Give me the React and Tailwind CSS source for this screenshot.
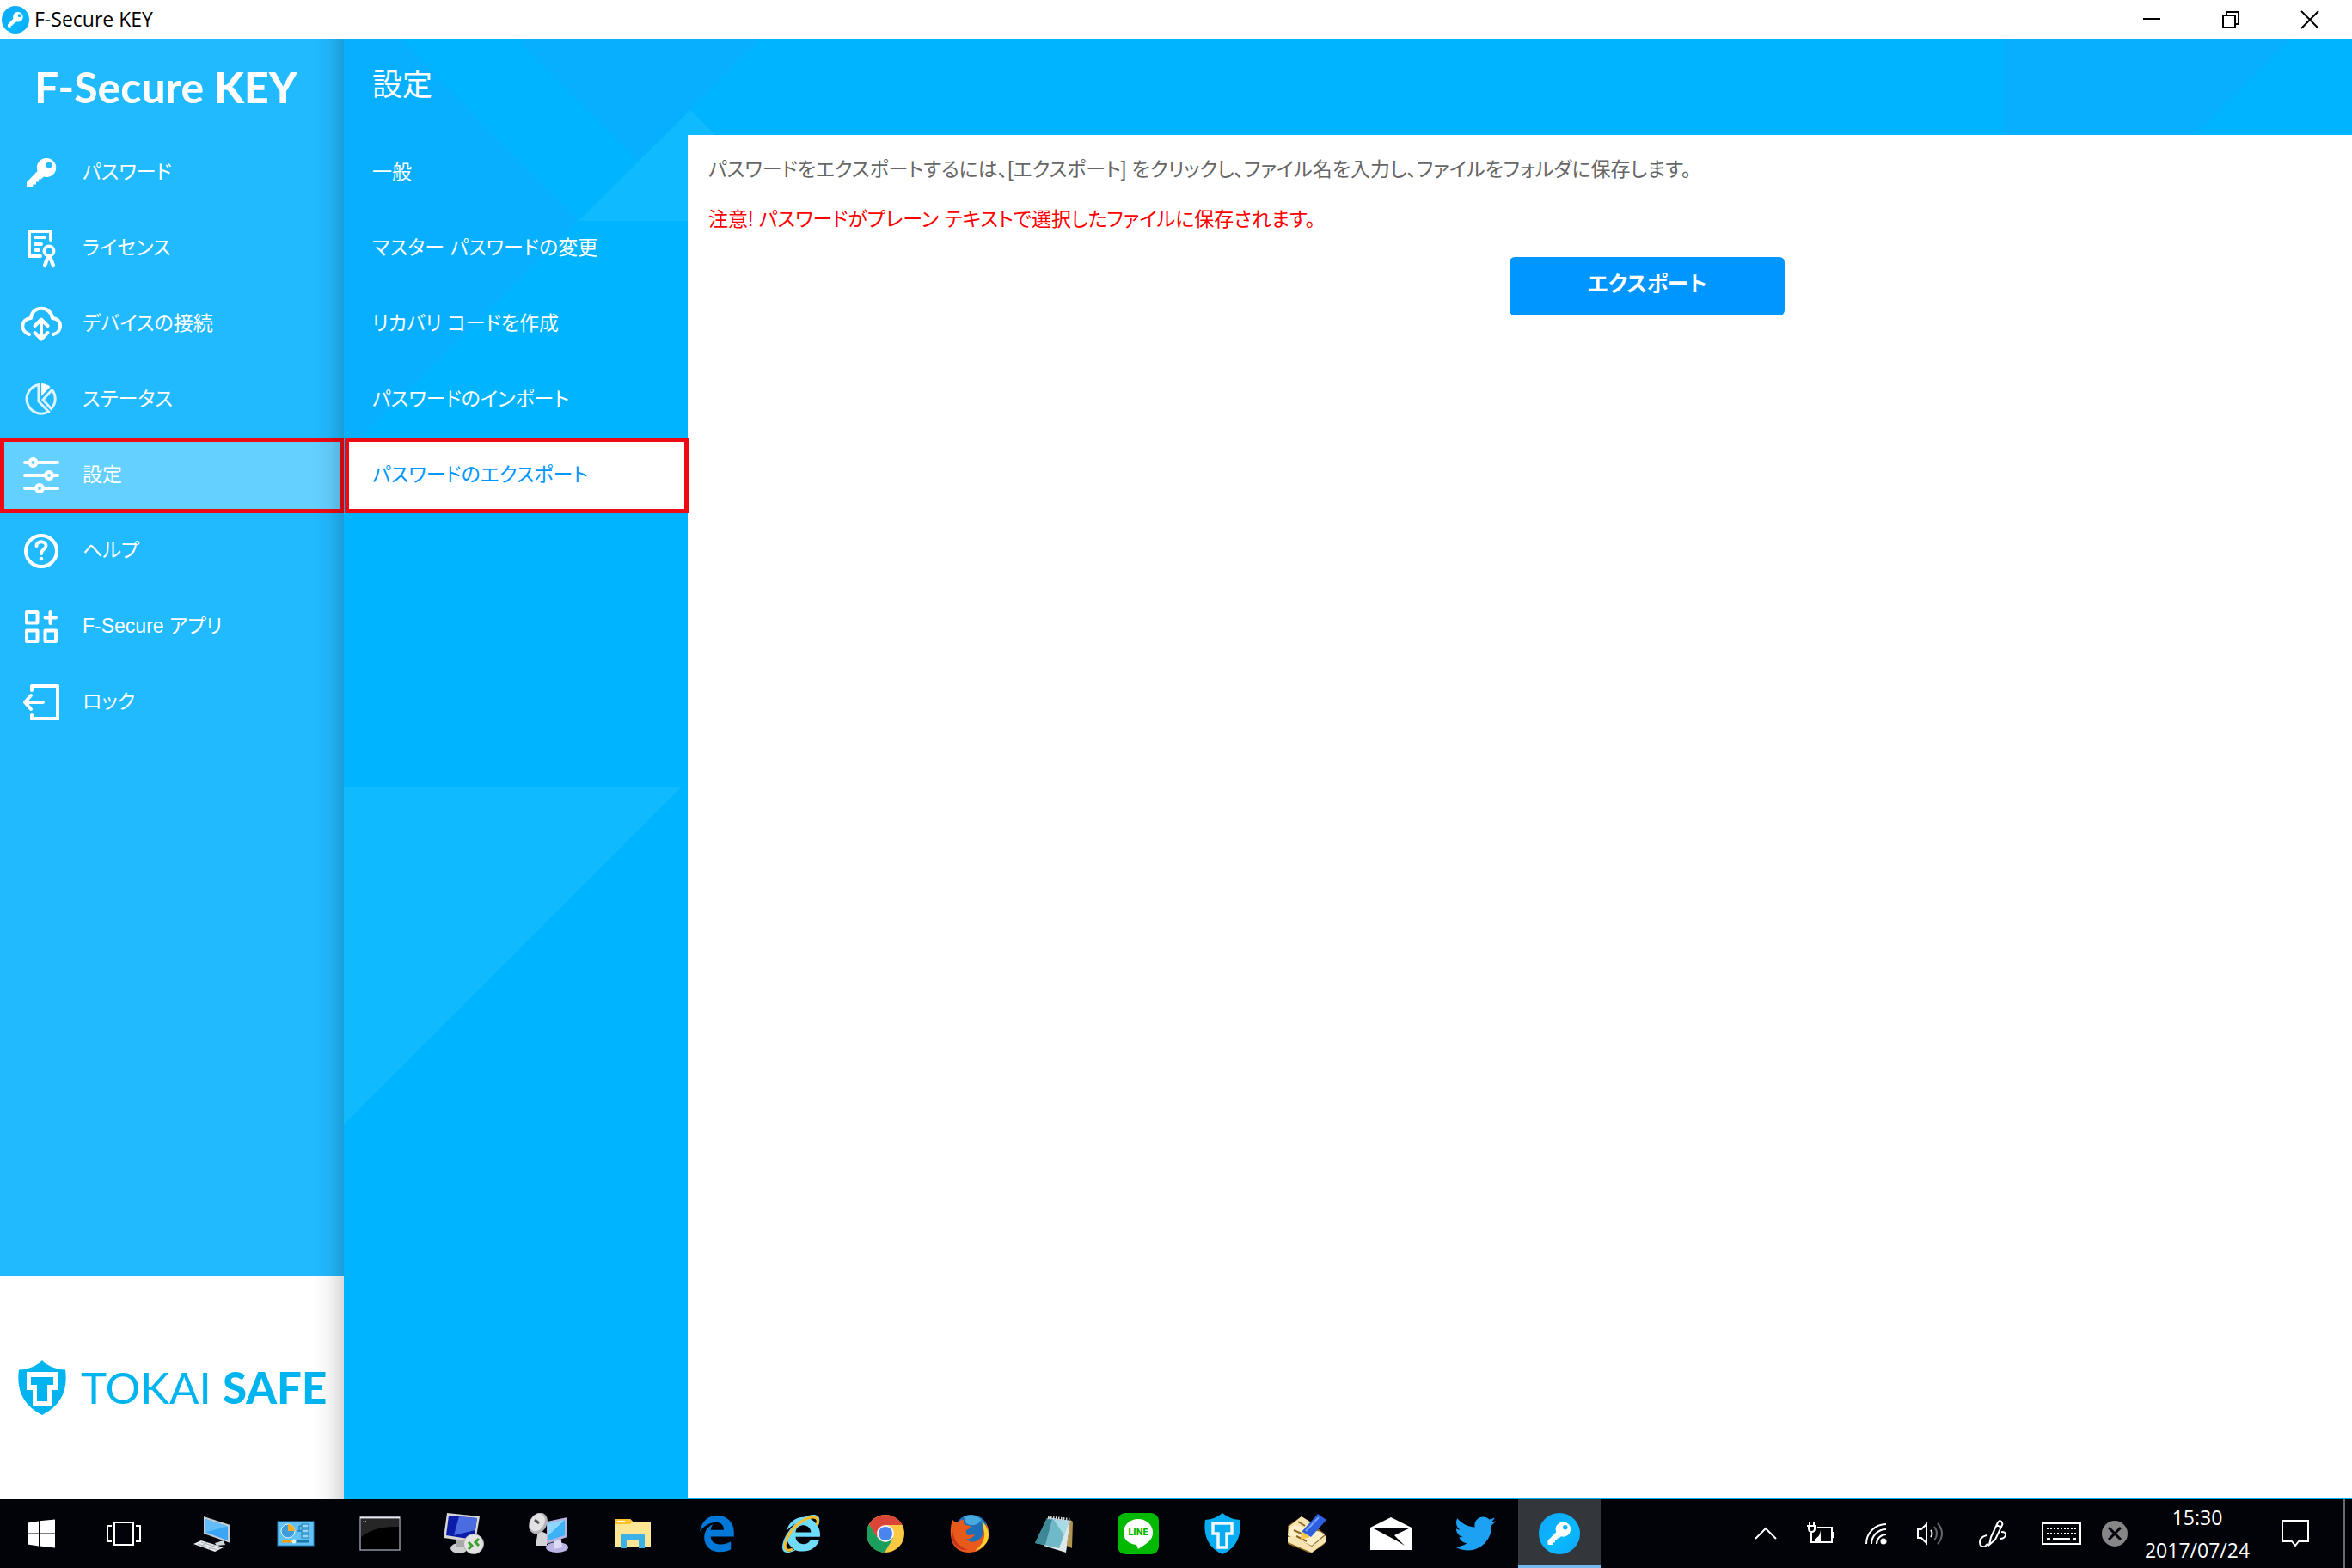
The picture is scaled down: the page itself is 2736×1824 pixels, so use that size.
import { FaEdgeLegacy, FaInternetExplorer, FaTwitter } from "react-icons/fa";

const line = {
  fill: "none",
  stroke: "currentColor",
  strokeWidth: 4,
  strokeLinecap: "round",
  strokeLinejoin: "round",
};

const Icon = ({ children, className = "size-12", viewBox = "0 0 48 48" }) => (
  <svg className={`shrink-0 ${className}`} viewBox={viewBox} aria-hidden="true">
    {children}
  </svg>
);

/* ---------- sidebar icons ---------- */

const KeyShape = () => (
  <path
    fill="currentColor"
    fillRule="evenodd"
    d="M30 7a11 11 0 1 1-3 21.500L23.500 31.500H21V34.500H18V37.500H14.500L14 41H8.500Q7 41 7 39.500V35L19.500 22A11 11 0 0 1 30 7ZM33 11.500a3.600 3.600 0 1 0 0.100 0Z"
  />
);

const KeyIcon = () => (
  <Icon>
    <KeyShape />
  </Icon>
);

const LicenseIcon = () => (
  <Icon>
    <g {...line}>
      <path d="M35 14V4H10V33H23" />
      <path d="M17 11H28M17 19H24M17.500 26H21" />
      <circle cx="33" cy="27" r="5.500" />
      <path d="M31.500 35L28 44M34.500 35L38 44" strokeWidth="4.500" />
    </g>
  </Icon>
);

const CloudIcon = () => (
  <Icon>
    <g {...line}>
      <path d="M10 36C-1 32 0 18 12 17C13 2 35 2 37 17C49 18 49 33 38 36" />
      <path d="M24 19V41M16.500 26L24 18.500L31.500 26M16.500 34L24 41.500L31.500 34" />
    </g>
  </Icon>
);

const StatusIcon = () => (
  <Icon>
    <g fill="none" stroke="currentColor" strokeWidth="3" opacity=".85">
      <path d="M21 6.500A17 17 0 1 0 32.500 38L21 26Z" />
      <path d="M36.500 12.500A16.500 16.500 0 0 1 35.500 34.500L26 24Z" />
    </g>
    <path d="M24 5A18 18 0 0 1 34.500 9L24 20Z" fill="currentColor" />
  </Icon>
);

const SlidersIcon = () => (
  <Icon>
    <g {...line}>
      <path d="M5 9H9M19 9H43M5 24H28M38 24H43M5 39H17M27 39H43" />
      <circle cx="14.500" cy="9" r="4" />
      <circle cx="33" cy="24" r="4" />
      <circle cx="22" cy="39" r="4" />
    </g>
  </Icon>
);

const HelpIcon = () => (
  <Icon>
    <g {...line}>
      <circle cx="24" cy="24" r="18" />
      <path d="M18.500 18C18.500 11.500 29.500 11.500 29.500 18C29.500 22 24 22 24 27" />
    </g>
    <circle cx="24" cy="33" r="2.300" fill="currentColor" />
  </Icon>
);

const AppsIcon = () => (
  <Icon>
    <g {...line}>
      <rect x="7" y="7" width="12.500" height="12.500" />
      <rect x="7" y="28.500" width="12.500" height="12.500" />
      <rect x="28.500" y="28.500" width="12.500" height="12.500" />
      <path d="M34.500 7V20M28.500 13.500H41" />
    </g>
  </Icon>
);

const LockIcon = () => (
  <Icon>
    <g {...line}>
      <path d="M13 10V5H43V43H13V38" />
      <path d="M5 24H26M12 16L5 24L12 32" />
    </g>
  </Icon>
);

/* ---------- logos ---------- */

const KeyBadge = ({ className }) => (
  <Icon className={className}>
    <defs>
      <linearGradient id="badge" x1="0" y1="0" x2="1" y2="1">
        <stop offset="0" stopColor="#12a5fb" />
        <stop offset=".6" stopColor="#08b9ff" />
        <stop offset="1" stopColor="#12a5fb" />
      </linearGradient>
    </defs>
    <circle cx="24" cy="24" r="24" fill="url(#badge)" />
    <g className="text-white" transform="translate(5 5) scale(.78)">
      <KeyShape />
    </g>
  </Icon>
);

const ShieldLogo = () => (
  <Icon className="h-16 w-[58px]" viewBox="0 0 58 64">
    <path
      fill="#00b4f0"
      d="M29 0Q38 11 56 11.500Q61 48 29 64Q-3 48 2 11.500Q20 11 29 0Z"
    />
    <path fill="#fff" d="M11 14H47V35H40V54H18V35H11Z" />
    <path fill="#00b4f0" d="M16 20H42V29H35V48H23V29H16Z" />
  </Icon>
);

/* ---------- taskbar icons ---------- */

const ComputerIcon = () => (
  <Icon>
    <path d="M28 35L38 32L40 37L30 38Z" fill="#cfd6da" />
    <path d="M15 4L46 14V35L15 24Z" fill="#c3ccd2" />
    <path d="M17 7L43 15.500V32L17 22.500Z" fill="#3aa5f5" />
    <path d="M17 7L43 15.500L17 22.500Z" fill="#64bcf8" />
    <path d="M3 36L12 32L38 40L28 45Z" fill="#e6eaee" />
    <path d="M8 36L31 43M12 34L34 41M12 39L19 34M21 42L28 37" stroke="#a4adb5" />
  </Icon>
);

const PanelIcon = () => (
  <Icon>
    <rect x="3" y="10" width="42" height="28" fill="#62c2f3" stroke="#2283bb" />
    <circle cx="15" cy="21" r="8" fill="#3e9edb" stroke="#e6f6ff" />
    <path d="M15 21V13A8 8 0 0 1 23 21Z" fill="#f8aa28" />
    <path d="M25 21H28V15H31M28 21H31" fill="none" stroke="#19669a" />
    <g fill="#92d8fb" stroke="#1c79b2">
      <rect x="31" y="13" width="8" height="4" />
      <rect x="31" y="19" width="8" height="4" />
      <rect x="31" y="25" width="8" height="4" />
    </g>
    <path d="M8 33H22" stroke="#f59f18" strokeWidth="3" />
    <path d="M22 33H39" stroke="#1b76ae" strokeWidth="3" />
    <circle cx="22" cy="33" r="2.500" fill="#e6f6ff" />
  </Icon>
);

const TerminalIcon = () => (
  <Icon>
    <rect x="1" y="5" width="46" height="38" fill="#000" stroke="#8d95a3" strokeWidth="1.500" />
    <path d="M2 7H46V16Q18 15 2 28Z" fill="#262626" />
    <path d="M1 5.500H47" stroke="#e5e9f2" strokeWidth="2" />
    <path d="M4 10H6M7 9L9 11" stroke="#aaa" />
  </Icon>
);

const RemoteIcon = () => (
  <Icon>
    <ellipse cx="18" cy="41" rx="10" ry="6" fill="#cfcfcf" />
    <path d="M14 30H24V40H14Z" fill="#a9a9a9" />
    <path d="M4 0L42 4L37 34L0 29Z" fill="#d8d6d2" />
    <path d="M6 3L39 6L35 31L3 26Z" fill="#0b1ca8" />
    <path d="M18 4L39 6L37 20L12 26Z" fill="#4b6be0" />
    <circle cx="35" cy="36" r="11.500" fill="#e4e4e2" stroke="#aaa" />
    <path d="M29 34L33 38L29 42M41 30L37 34L41 38" fill="none" stroke="#3c9f2d" strokeWidth="3" />
  </Icon>
);

const DishIcon = () => (
  <Icon>
    <ellipse cx="34" cy="40" rx="13" ry="6" fill="#b9b6e6" />
    <path d="M12 20L22 24V38H9Z" fill="#d5d5d8" />
    <ellipse cx="12" cy="12" rx="10" ry="13" fill="#b4b4b8" transform="rotate(30 12 12)" />
    <ellipse cx="11" cy="11" rx="8" ry="11" fill="#e2e2e3" transform="rotate(30 11 11)" />
    <path d="M8 8L13 12" stroke="#555" strokeWidth="3" />
    <path d="M30 28L38 26L40 40L30 42Z" fill="#dcdaf5" />
    <path d="M22 10L46 5V28L22 36Z" fill="#b7b2df" />
    <path d="M24 12L43 8V26L24 32Z" fill="#3db2f5" />
    <path d="M24 12L43 8L24 26Z" fill="#8ed6fb" />
  </Icon>
);

const FolderIcon = () => (
  <Icon>
    <path d="M3 8Q3 7 4 7H21L24 10H44Q45 10 45 11V40H3Z" fill="#ffe694" />
    <path d="M3 13V8Q3 7 4 7H21L24 10L21 13Z" fill="#fcc32c" />
    <path d="M6 10H15" stroke="#fff" strokeWidth="2" />
    <path d="M10 41V26Q10 24 12 24H36Q38 24 38 26V41H31V31H17V41Z" fill="#3bb1e5" />
  </Icon>
);

const IeIcon = () => (
  <span className="relative">
    <FaInternetExplorer className="size-11 text-[#6fdcfb]" />
    <svg className="absolute inset-0 size-11" viewBox="0 0 44 44" aria-hidden="true">
      <path
        d="M12 40C4 44 1 38 5 29C11 14 27 2 37 3C42 4 42 8 40 12"
        fill="none"
        stroke="#f7bd2a"
        strokeWidth="3"
      />
    </svg>
  </span>
);

const ChromeIcon = () => (
  <Icon>
    <circle cx="24" cy="24" r="22" fill="#fcc943" />
    <path d="M5 13A22 22 0 0 0 23 46L33 29L24 24L15 29Z" fill="#1c9f5e" />
    <path d="M5 13A22 22 0 0 1 43.500 14H24L14 28Z" fill="#db4537" />
    <circle cx="24" cy="24" r="10" fill="#f1f1f1" />
    <circle cx="24" cy="24" r="8" fill="#4a85ef" />
  </Icon>
);

const FirefoxIcon = () => (
  <Icon>
    <circle cx="26" cy="22" r="20" fill="#1f6fb8" />
    <path d="M17 4Q28 -1 38 8Q30 18 20 12Z" fill="#48a9de" />
    <path
      d="M4 8Q8 12 11 11Q14 7 17 8Q16 12 19 14L25 15Q25 18 20 20Q19 24 22 26L30 25Q27 31 20 30Q26 37 35 31Q42 25 39 12Q44 16 43 12Q49 24 44 34Q37 46 24 46Q4 46 2 26Q1 16 4 8Z"
      fill="#e75a1c"
    />
    <path d="M38 9Q50 21 44 34Q38 42 30 44Q43 34 41 22Z" fill="#fbd232" />
    <path d="M4 20Q6 38 22 43Q8 44 3 30Z" fill="#c9321c" />
  </Icon>
);

const NotepadIcon = () => (
  <Icon>
    <path d="M43 8L46 10L45 41L39 38Z" fill="#b49550" />
    <path d="M17 5L43 9L38 46L12 38Z" fill="#dde7ea" />
    <path d="M16 6L42 9L30 41L2 35Z" fill="#6fb9c9" />
    <path d="M16 6L22 7L14 37L2 35Z" fill="#3e8797" />
    <path d="M24 8L42 9L36 26Z" fill="#a8dbe5" />
    <path d="M17 5L43 8" stroke="#d8d8d8" strokeWidth="4" strokeDasharray="1.500 1.500" />
  </Icon>
);

const LineIcon = () => (
  <Icon>
    <rect width="48" height="48" rx="9" fill="#00b900" />
    <path d="M24 7C34 7 41 14 41 23C41 32 33 36 24 42Q23 39 22 37C13 36 7 31 7 23C7 14 14 7 24 7Z" fill="#fff" />
    <text
      x="24"
      y="26"
      textAnchor="middle"
      fontFamily="Roboto"
      fontWeight="900"
      fontSize="11"
      fill="#00b900"
    >
      LINE
    </text>
  </Icon>
);

const ShieldIcon = () => (
  <Icon>
    <path d="M24 0Q32 7 44 8Q48 37 24 48Q0 37 4 8Q16 7 24 0Z" fill="#07adf2" />
    <path d="M13 12H35V24H29V40H19V24H13Z" fill="#07adf2" stroke="#eef6fa" strokeWidth="3.500" />
  </Icon>
);

const NotesIcon = () => (
  <Icon>
    <path d="M18 4L45 24V36L29 47L2 36L2 15Z" fill="#8e6827" />
    <path d="M18 4L34 14L24 26L3 16Z" fill="#f6e4b2" />
    <path d="M3 18L10 14L40 22L45 25L30 38L2 26Z" fill="#fdf0c8" />
    <path d="M2 28L8 27L30 39L46 26L46 34L30 46L2 34Z" fill="#f6e4b2" />
    <path d="M12 27L24 33M9 20L20 25M14 10L22 15" stroke="#8e6827" strokeWidth="2" />
    <path d="M37 1L47 8L29 28L18 22Z" fill="#2b5fe0" />
    <path d="M18 21L28 28L17 31Z" fill="#f7c748" />
    <path d="M38 5L23 21" stroke="#7da0f7" strokeWidth="2" />
  </Icon>
);

const MailIcon = () => (
  <Icon>
    <path d="M24 5L48 17V43H0V17Z" fill="#fff" />
    <path d="M2 17H47L28 26L40 38L32 33Z" fill="#010308" />
  </Icon>
);

const StartIcon = () => (
  <Icon>
    <path d="M8 11.500L21 9.500V23.500H8ZM22 9.300L40 7.500V23.500H22ZM8 24.500H21V38.500L8 36.500ZM22 24.500H40V40.500L22 38.500Z" fill="#fff" />
  </Icon>
);

const TaskViewIcon = () => (
  <Icon>
    <path d="M13 11H35V37H13ZM10 15H5V33H10M38 15H43V33H38" fill="none" stroke="#fff" strokeWidth="2" />
  </Icon>
);

const tasks = [
  { name: "PC", icon: <ComputerIcon /> },
  { name: "コントロール パネル", icon: <PanelIcon /> },
  { name: "コマンド プロンプト", icon: <TerminalIcon /> },
  { name: "リモート デスクトップ", icon: <RemoteIcon /> },
  { name: "ネットワーク", icon: <DishIcon /> },
  { name: "エクスプローラー", icon: <FolderIcon /> },
  { name: "Edge", icon: <FaEdgeLegacy className="size-11 text-[#0078d7]" /> },
  { name: "Internet Explorer", icon: <IeIcon /> },
  { name: "Chrome", icon: <ChromeIcon /> },
  { name: "Firefox", icon: <FirefoxIcon /> },
  { name: "メモ帳", icon: <NotepadIcon /> },
  { name: "LINE", icon: <LineIcon /> },
  { name: "TOKAI SAFE", icon: <ShieldIcon /> },
  { name: "エディター", icon: <NotesIcon /> },
  { name: "メール", icon: <MailIcon /> },
  { name: "Twitter", icon: <FaTwitter className="size-12 text-[#1da1f2]" /> },
  { name: "F-Secure KEY", icon: <KeyBadge />, active: true },
];

const menu = [
  { label: "パスワード", icon: <KeyIcon /> },
  { label: "ライセンス", icon: <LicenseIcon /> },
  { label: "デバイスの接続", icon: <CloudIcon /> },
  { label: "ステータス", icon: <StatusIcon /> },
  { label: "設定", icon: <SlidersIcon />, active: true },
  { label: "ヘルプ", icon: <HelpIcon /> },
  { label: "F-Secure アプリ", icon: <AppsIcon /> },
  { label: "ロック", icon: <LockIcon /> },
];

const settings = [
  { label: "一般" },
  { label: "マスター パスワードの変更" },
  { label: "リカバリ コードを作成" },
  { label: "パスワードのインポート" },
  { label: "パスワードのエクスポート", active: true },
];

const TitleBar = () => (
  <div className="flex h-[45px] items-center bg-white font-['Open_Sans',sans-serif] text-[23px] text-black">
    <KeyBadge className="ml-0.5 size-8" />
    <span className="ml-1.5">F-Secure KEY</span>
    <div className="ml-auto flex h-full pr-[3px]">
      <button aria-label="最小化" className="flex w-[92px] items-center justify-center">
        <Icon className="size-6" viewBox="0 0 24 24">
          <path d="M2 11H22" stroke="#000" strokeWidth="2" />
        </Icon>
      </button>
      <button aria-label="元に戻す" className="flex w-[92px] items-center justify-center">
        <Icon className="size-6" viewBox="0 0 24 24">
          <path d="M3 7H17V21H3ZM7 7V3H21V17H17" fill="none" stroke="#000" strokeWidth="2" />
        </Icon>
      </button>
      <button aria-label="閉じる" className="flex w-[92px] items-center justify-center">
        <Icon className="size-6" viewBox="0 0 24 24">
          <path d="M2 2L22 22M22 2L2 22" stroke="#000" strokeWidth="2" />
        </Icon>
      </button>
    </div>
  </div>
);

const Sidebar = () => (
  <aside className="relative flex w-[400px] shrink-0 flex-col">
    <div className="flex-1 bg-[#21baff]">
      <h1 className="flex h-28 items-center pl-10 font-['Lato',sans-serif] text-[50px] font-bold">
        <span>
          F-Secure <b className="font-black">KEY</b>
        </span>
      </h1>
      <nav>
        {menu.map((item) => (
          <a
            key={item.label}
            href="#"
            className={`relative flex h-[88px] items-center ${
              item.active
                ? "z-10 border-5 border-[#ee0a12] bg-[#64d0ff] pl-[19px]"
                : "pl-6"
            }`}
          >
            {item.icon}
            <span className="ml-6 pb-0.5">{item.label}</span>
          </a>
        ))}
      </nav>
    </div>
    <div className="flex h-[260px] items-center bg-white pl-5 text-[#00b4f0]">
      <ShieldLogo />
      <span className="ml-4 whitespace-nowrap font-['Lato',sans-serif] text-[51px] font-normal">
        TOKAI <b className="font-black">SAFE</b>
      </span>
    </div>
    <div className="pointer-events-none absolute inset-y-0 right-0 z-20 w-9 bg-linear-to-r from-black/0 via-black/4 to-black/15" />
  </aside>
);

const Facets = () => (
  <>
    <svg className="absolute top-0 left-0" width="560" height="1699" aria-hidden="true">
      <path d="M0 0H65L272 212L0 484ZM202 0H485L342 142Z" fill="#08afff" />
      <path d="M403 83L273 212H532ZM0 870H393L0 1263Z" fill="#10baff" />
    </svg>
    <svg className="absolute top-0 right-0" width="406" height="112" aria-hidden="true">
      <path d="M0 0H334L222 112H0Z" fill="#08afff" />
    </svg>
  </>
);

const Settings = () => (
  <section className="relative flex flex-1 flex-col bg-[#00b4ff]">
    <Facets />
    <h2 className="relative flex h-28 items-center pb-1 pl-[33px] text-[35px]">設定</h2>
    <div className="relative flex flex-1">
      <nav className="w-[400px] shrink-0">
        {settings.map((item) => (
          <a
            key={item.label}
            href="#"
            className={`flex h-[88px] items-center ${
              item.active
                ? "relative z-10 ml-px -mr-px border-5 border-[#ee0a12] bg-white pl-[27px] text-[#0096ff]"
                : "pl-[33px]"
            }`}
          >
            <span className="pb-0.5">{item.label}</span>
          </a>
        ))}
      </nav>
      <main className="mb-px flex-1 bg-white pt-[22px] pr-12 pl-6">
        <p className="leading-9 text-[#666]">
          パスワードをエクスポートするには、[エクスポート] をクリックし、ファイル名を入力し、ファイルをフォルダに保存します。
        </p>
        <p className="mt-[22px] leading-9 text-[#f00]">
          注意! パスワードがプレーン テキストで選択したファイルに保存されます。
        </p>
        <div className="mt-[26px] grid grid-cols-2">
          <button className="col-start-2 h-[68px] w-80 rounded-md bg-[#0096ff] pb-1 text-[25px] font-bold text-white">
            エクスポート
          </button>
        </div>
      </main>
    </div>
  </section>
);

const Tray = () => (
  <div className="ml-auto flex items-center text-white">
    <button aria-label="隠れているインジケーター" className="flex w-16 justify-center">
      <Icon className="size-8" viewBox="0 0 32 32">
        <path d="M4 22L16 10L28 22" fill="none" stroke="currentColor" strokeWidth="2" />
      </Icon>
    </button>
    <button aria-label="電源" className="flex w-16 justify-center">
      <Icon className="size-8" viewBox="0 0 32 32">
        <path d="M12 9H29V26H5V15M31 14V21M2 6V10Q2 14 5.500 14T9 10V6M0 7H11M3 2V7M8 2V7" fill="none" stroke="currentColor" strokeWidth="2" />
        <path d="M9 26V22Q15 20 16 12V26Z" fill="currentColor" />
      </Icon>
    </button>
    <button aria-label="ネットワーク" className="flex w-16 justify-center">
      <Icon className="size-8" viewBox="0 0 32 32">
        <path d="M5 28A23 23 0 0 1 28 5M11 28A17 17 0 0 1 28 11M17 28A11 11 0 0 1 28 17" fill="none" stroke="currentColor" strokeWidth="2" />
        <circle cx="25" cy="25" r="3.500" fill="currentColor" />
      </Icon>
    </button>
    <button aria-label="音量" className="flex w-16 justify-center">
      <Icon className="size-8" viewBox="0 0 32 32">
        <g fill="none" stroke="currentColor" strokeWidth="2">
          <path d="M1 11H5L11 5V27L5 21H1ZM16 12Q19 16 16 20" />
          <path d="M20 8Q26 16 20 24M24 4Q34 16 24 28" opacity=".4" />
        </g>
      </Icon>
    </button>
    <button aria-label="ペン" className="flex w-20 justify-center">
      <Icon className="size-8" viewBox="0 0 32 32">
        <path d="M12 29L14 20L22 3Q24 0 26 2Q28 4 27 6L19 23ZM21 6L26 9M18 12L15 18M9 18Q1 20 1 26T7 31L10 28M26 14Q32 14 31 18T24 22" fill="none" stroke="currentColor" strokeWidth="2" />
      </Icon>
    </button>
    <button aria-label="タッチ キーボード" className="flex w-20 justify-center">
      <Icon className="h-8 w-12" viewBox="0 0 48 32">
        <rect x="2" y="4" width="44" height="24" fill="none" stroke="currentColor" strokeWidth="2" />
        <path d="M7 10H42M7 16H42" stroke="currentColor" strokeWidth="2" strokeDasharray="2 2" />
        <path d="M7 22H11M14 22H34M37 22H41" stroke="currentColor" strokeWidth="2" />
      </Icon>
    </button>
    <button aria-label="IME 無効" className="flex w-11 justify-center">
      <Icon className="size-8" viewBox="0 0 32 32">
        <circle cx="16" cy="16" r="15" fill="#868686" />
        <path d="M9 9L23 23M23 9L9 23" stroke="#010308" strokeWidth="3" />
      </Icon>
    </button>
    <div className="w-[148px] text-center font-['Open_Sans',sans-serif] text-[23px] leading-[38px]">
      <div>15:30</div>
      <div>2017/07/24</div>
    </div>
    <button aria-label="アクション センター" className="flex w-20 justify-center">
      <Icon className="size-8" viewBox="0 0 32 32">
        <path d="M1 1H31V25H20L16 30L12 25H1Z" fill="none" stroke="currentColor" strokeWidth="2" />
      </Icon>
    </button>
    <div className="ml-4 w-2.5 self-stretch border-l-2 border-[#666a6d]" />
  </div>
);

const Taskbar = () => (
  <footer className="flex h-20 bg-[#010308]">
    <button aria-label="スタート" className="flex w-24 items-center justify-center">
      <StartIcon />
    </button>
    <button aria-label="タスク ビュー" className="flex w-24 items-center justify-center">
      <TaskViewIcon />
    </button>
    <div className="ml-1.5 flex gap-0.5">
      {tasks.map((task) => (
        <button
          key={task.name}
          aria-label={task.name}
          className={`flex w-24 items-center justify-center ${
            task.active ? "border-b-4 border-[#76b9ed] bg-[#33363a] pt-1" : ""
          }`}
        >
          {task.icon}
        </button>
      ))}
    </div>
    <Tray />
  </footer>
);

export default function App() {
  return (
    <div className="flex min-h-screen flex-col bg-white font-['Liberation_Sans','Noto_Sans_CJK_JP',sans-serif] text-[23px] text-white [font-feature-settings:'palt']">
      <TitleBar />
      <div className="flex flex-1">
        <Sidebar />
        <Settings />
      </div>
      <Taskbar />
    </div>
  );
}
